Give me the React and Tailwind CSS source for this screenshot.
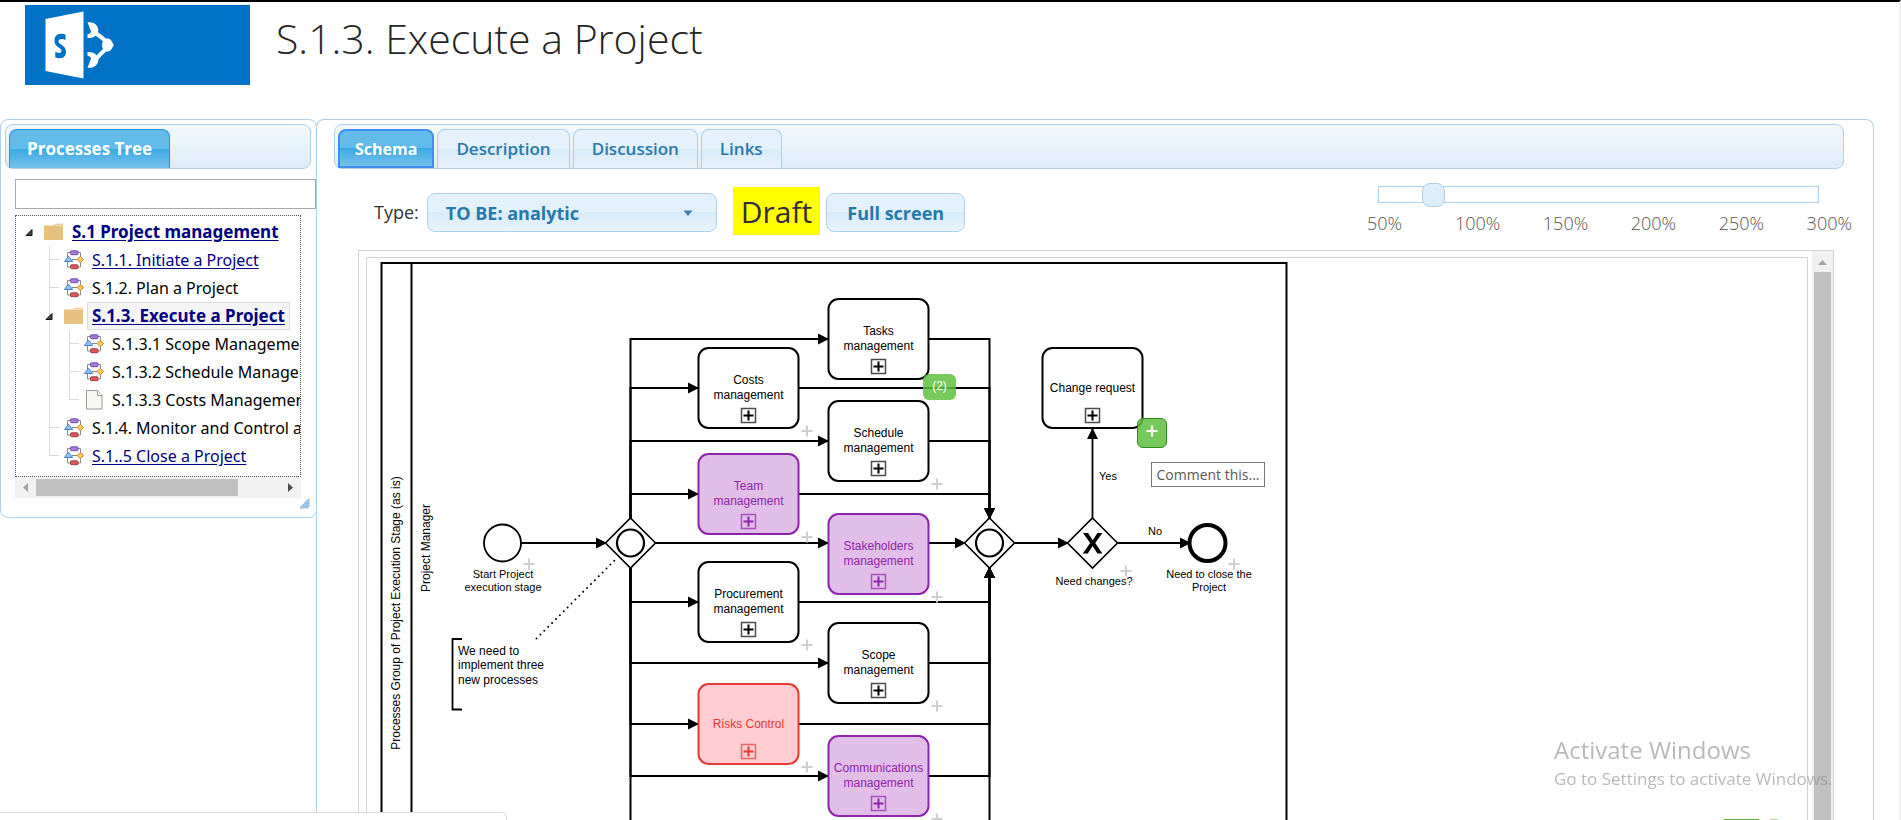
const TASKS = [
  { x: 828, y: 299, lines: ["Tasks", "management"], plus: false },
  { x: 698, y: 348, lines: ["Costs", "management"] },
  { x: 828, y: 401, lines: ["Schedule", "management"] },
  { x: 698, y: 454, lines: ["Team", "management"], tone: "purple" },
  { x: 828, y: 514, lines: ["Stakeholders", "management"], tone: "purple" },
  { x: 698, y: 562, lines: ["Procurement", "management"] },
  { x: 828, y: 623, lines: ["Scope", "management"] },
  { x: 698, y: 684, lines: ["Risks Control"], tone: "red" },
  { x: 828, y: 736, lines: ["Communications", "management"], tone: "purple" },
  { x: 1042, y: 348, lines: ["Change request"], plus: false },
];

const TONES = {
  plain: { fill: "#ffffff", stroke: "#000000" },
  purple: { fill: "#e1bee7", stroke: "#8e24aa" },
  red: { fill: "#ffcdd2", stroke: "#e53935" },
};

const BRANCHES = [
  { y: 339, to: 828, from: 928, join: 518 },
  { y: 388, to: 698, from: 798, join: 518 },
  { y: 441, to: 828, from: 928, join: 518 },
  { y: 494, to: 698, from: 798, join: 518 },
  { y: 602, to: 698, from: 798, join: 568 },
  { y: 663, to: 828, from: 928, join: 568 },
  { y: 724, to: 698, from: 798, join: 568 },
  { y: 776, to: 828, from: 928, join: 568 },
  { y: 840, to: 698, from: 798, join: 568 },
];

function Task({ x, y, lines, tone = "plain", plus = true }) {
  const { fill, stroke } = TONES[tone];
  const first = lines.length === 1 ? 44 : 36;
  return (
    <g>
      <rect x={x + 0.5} y={y} width="100" height="80" rx="10" fill={fill} stroke={stroke} strokeWidth="2" />
      {lines.map((line, i) => (
        <text key={line} x={x + 50.5} y={y + first + i * 15} textAnchor="middle" fontSize="12" fill={stroke}>
          {line}
        </text>
      ))}
      <rect x={x + 43.5} y={y + 60.5} width="14" height="14" fill="none" stroke={stroke} strokeWidth="1.5" strokeOpacity="0.7" />
      <path d={`M${x + 45.5} ${y + 67.5}h10M${x + 50.5} ${y + 62.5}v10`} stroke={stroke} strokeWidth="2" fill="none" />
      {plus && <Plus x={x + 109} y={y + 83} />}
    </g>
  );
}

function Plus({ x, y }) {
  return <path d={`M${x - 5.5} ${y}h11M${x} ${y - 5.5}v11`} stroke="#cfcfcf" strokeWidth="2" fill="none" />;
}

function Gateway({ x, y, children }) {
  return (
    <g>
      <path d={`M${x} ${y - 25}l25 25l-25 25l-25 -25z`} fill="#fff" stroke="#000" strokeWidth="1.6" />
      {children}
    </g>
  );
}

function Diagram() {
  return (
    <svg width="940" height="620" role="img" aria-label="Project execution process" className="block font-['Liberation_Sans',Arial,sans-serif]">
      <defs>
        <marker id="arrow" viewBox="0 0 11 12" refX="10" refY="6" markerWidth="11" markerHeight="12" markerUnits="userSpaceOnUse" orient="auto">
          <path d="M0 0.5L11 6L0 11.5z" fill="#000" />
        </marker>
      </defs>
      <g transform="translate(-367 -258)">
        <rect x="381.5" y="263" width="905" height="700" fill="none" stroke="#000" strokeWidth="2" />
        <path d="M411.5 263v700" stroke="#000" strokeWidth="2" />
        <text transform="translate(400 613) rotate(-90)" textAnchor="middle" fontSize="12">
          Processes Group of Project Execution Stage (as is)
        </text>
        <text transform="translate(430 548) rotate(-90)" textAnchor="middle" fontSize="12">
          Project Manager
        </text>

        <g fill="none" stroke="#000" strokeWidth="2">
          {BRANCHES.map((b) => (
            <g key={b.y}>
              <path d={`M630.5 ${b.join}V${b.y}H${b.to}`} markerEnd="url(#arrow)" />
              <path d={`M${b.from} ${b.y}H989.5V${b.join}`} markerEnd="url(#arrow)" />
            </g>
          ))}
          <path d="M521 543H606" markerEnd="url(#arrow)" />
          <path d="M655 543H828" markerEnd="url(#arrow)" />
          <path d="M928 543H965" markerEnd="url(#arrow)" />
          <path d="M1014 543H1068" markerEnd="url(#arrow)" />
          <path d="M1117 543H1190" markerEnd="url(#arrow)" />
          <path d="M1092.5 518V429" strokeWidth="1.8" markerEnd="url(#arrow)" />
          <path d="M536.5 638.5L617 558" strokeDasharray="0 5.5" strokeLinecap="round" />
          <path d="M462 639H452.500V709.500H462" strokeWidth="1.8" />
        </g>

        <circle cx="502.500" cy="543" r="18.500" fill="#fff" stroke="#000" strokeWidth="1.800" />
        <Gateway x={630.5} y={543}>
          <circle cx="630.5" cy="543" r="13.5" fill="none" stroke="#000" strokeWidth="2.2" />
        </Gateway>
        <Gateway x={989.5} y={543}>
          <circle cx="989.5" cy="543" r="13.5" fill="none" stroke="#000" strokeWidth="2.2" />
        </Gateway>
        <Gateway x={1092.5} y={543}>
          <path d="M1083 533h5l4.800 7.200l4.600 -7.200h5l-7.200 10l7.200 10.500h-5l-4.800 -7.500l-4.800 7.500h-5l7.400 -10.500z" fill="#000" />
        </Gateway>
        <circle cx="1207.500" cy="543" r="18" fill="#fff" stroke="#000" strokeWidth="4" />

        {TASKS.map((t) => (
          <Task key={t.lines.join(" ")} {...t} />
        ))}
        <Plus x={529} y={564} />
        <Plus x={1126} y={571} />
        <Plus x={1234} y={564} />

        <g fontSize="12">
          <text x="458" y="655">We need to</text>
          <text x="458" y="669">implement three</text>
          <text x="458" y="684">new processes</text>
        </g>
        <g fontSize="11" textAnchor="middle">
          <text x="503" y="578">Start Project</text>
          <text x="503" y="591">execution stage</text>
          <text x="1094" y="585">Need changes?</text>
          <text x="1209" y="578">Need to close the</text>
          <text x="1209" y="591">Project</text>
          <text x="1108" y="480">Yes</text>
          <text x="1155" y="535">No</text>
        </g>
      </g>
    </svg>
  );
}

function ProcessIcon() {
  return (
    <svg viewBox="0 0 20 20" className="size-5 shrink-0" aria-hidden="true">
      <path d="M7 2.500H3.500V17H7M13 2.500H16.500V17H13M8 9.500H13" fill="none" stroke="#8a8a8a" strokeWidth="1" />
      <rect x="6.500" y="0.800" width="7.500" height="3.900" rx="1" fill="#a57bdc" stroke="#6a3fa5" strokeWidth="0.900" />
      <path d="M4.500 6.200L8.700 11.500H0.300z" fill="#8fc1f7" stroke="#3c78c8" strokeWidth="0.900" />
      <path d="M16.300 6.300L19.500 9.500L16.300 12.700L13.100 9.500z" fill="#ffc95c" stroke="#b98222" strokeWidth="0.900" />
      <rect x="6.500" y="14.800" width="7.500" height="3.900" rx="1" fill="#e0565b" stroke="#943438" strokeWidth="0.900" />
    </svg>
  );
}

function FolderIcon() {
  return (
    <svg viewBox="0 0 20 20" className="size-5 shrink-0" aria-hidden="true">
      <path d="M0 3.500h10l1.500-1.800h7.500v16.300H0z" fill="#e8c080" />
      <path d="M11.500 3.200h7" stroke="#fff3da" strokeWidth="1" />
    </svg>
  );
}

function PageIcon() {
  return (
    <svg viewBox="0 0 20 20" className="size-5 shrink-0" aria-hidden="true">
      <path d="M2.500 0.500h11l4.500 5v13.500H2.500z" fill="#f7f8f4" stroke="#9a9a94" />
      <path d="M13.500 0.500v5h4.500" fill="#fff" stroke="#9a9a94" />
    </svg>
  );
}

function Guide({ kind }) {
  return (
    <svg viewBox="0 0 20 28" className="h-7 w-5 shrink-0" aria-hidden="true">
      <g fill="none" stroke="#d9d9d9">
        {(kind === "line" || kind === "tee" || kind === "open-tee") && <path d="M9.500 0V28" />}
        {kind === "tee" && <path d="M10 13.500H19" />}
        {kind === "elbow" && <path d="M9.500 0V13.500H19" />}
      </g>
      {(kind === "open" || kind === "open-tee") && <path d="M12 11.500V17.500H6z" fill="#444" stroke="#111" />}
    </svg>
  );
}

const TREE = [
  { guides: ["open"], icon: "folder", text: "S.1 Project management", link: true, bold: true },
  { guides: ["", "tee"], text: "S.1.1. Initiate a Project", link: true },
  { guides: ["", "tee"], text: "S.1.2. Plan a Project" },
  { guides: ["", "open-tee"], icon: "folder", text: "S.1.3. Execute a Project", link: true, bold: true, selected: true },
  { guides: ["", "line", "tee"], text: "S.1.3.1 Scope Management" },
  { guides: ["", "line", "tee"], text: "S.1.3.2 Schedule Management" },
  { guides: ["", "line", "elbow"], icon: "page", text: "S.1.3.3 Costs Management" },
  { guides: ["", "tee"], text: "S.1.4. Monitor and Control a Project" },
  { guides: ["", "elbow"], text: "S.1..5 Close a Project", link: true },
];

function TreeRow({ guides, icon, text, link, bold, selected }) {
  const box = selected
    ? "ml-[3px] border border-[#ddd] bg-[#f5f5f5] px-1 leading-[26px]"
    : "ml-2 leading-7";
  const weight = bold ? "text-[17px] font-bold" : "text-base";
  return (
    <li className="flex h-7 items-center whitespace-nowrap">
      {guides.map((g, i) => (
        <Guide key={i} kind={g} />
      ))}
      <span className="ml-1 shrink-0">
        {icon === "folder" ? <FolderIcon /> : icon === "page" ? <PageIcon /> : <ProcessIcon />}
      </span>
      <span className={`${box} ${weight}`}>
        {link ? (
          <a href="#process" className="text-[#000080] underline underline-offset-2">{text}</a>
        ) : (
          text
        )}
      </span>
    </li>
  );
}

const BAR = "flex h-[45px] items-end gap-[3px] rounded-lg border border-[#aed0ea] bg-linear-to-b from-[#f3f8fd] to-[#deecf8] pl-[3px]";
const TAB = "h-[39px] rounded-t-lg border font-['Open_Sans',sans-serif]";
const TAB_ON = "bg-linear-to-b from-[#62bbe9] from-50% via-[#3aaae3] via-50% to-[#74c1eb] font-bold text-white";
const TAB_OFF = "border-b-0 border-[#aed0ea] bg-linear-to-b from-[#e5f2fb] from-50% via-[#d7ebf9] via-50% to-[#e8f3fc] px-[18px] text-[17px] font-semibold text-[#2779aa]";
const CONTROL = "h-[39px] rounded-lg border border-[#aed0ea] bg-linear-to-b from-[#e3f1fb] from-50% via-[#d7ebf9] via-50% to-[#e8f3fc] text-lg font-bold text-[#2779aa]";

function Sidebar() {
  return (
    <aside className="w-[317px] shrink-0 rounded-lg border border-[#aed0ea] bg-white pt-1 pb-2">
      <div className={`${BAR} mr-[5px] ml-1`} role="tablist">
        <button role="tab" aria-selected="true" className={`${TAB} ${TAB_ON} border-b-0 border-[#2694e8] px-[17px] text-[17px]`}>Processes Tree</button>
      </div>
      <input aria-label="Search processes" className="mt-[10px] ml-[14px] block h-[30px] w-[301px] border border-[#a9a9a9] px-2 outline-none" />
      <div className="mt-[6px] mr-[15px] ml-[14px]">
        <ul className="overflow-hidden border border-dotted border-[#555] pt-[2px] pb-[6px] pl-1 font-['Noto_Sans',sans-serif] text-black">
          {TREE.map((row) => (
            <TreeRow key={row.text} {...row} />
          ))}
        </ul>
        <div className="flex h-[21px] items-center bg-[#f1f1f1]" aria-hidden="true">
          <svg viewBox="0 0 21 21" className="size-[21px] shrink-0"><path d="M13 6v9l-5-4.500z" fill="#a3a3a3" /></svg>
          <div className="h-[17px] w-[202px] bg-[#c1c1c1]" />
          <svg viewBox="0 0 21 21" className="ml-auto size-[21px] shrink-0"><path d="M8 6v9l5-4.500z" fill="#505050" /></svg>
        </div>
      </div>
      <svg viewBox="0 0 10 10" className="mt-[1px] mr-[6px] ml-auto size-[10px]" aria-hidden="true">
        <path d="M0 9.500L9.500 0M3 9.500L9.500 3M6 9.500L9.500 6" stroke="#8dbbe0" strokeWidth="1.800" fill="none" />
      </svg>
    </aside>
  );
}

function ZoomSlider() {
  return (
    <div className="-mt-[7px] mr-[21px] ml-auto w-[485px]">
      <input
        type="range"
        min="50"
        max="300"
        defaultValue="76"
        aria-label="Zoom"
        className="mx-[11px] block h-[17px] w-[441px] appearance-none border border-[#aed0ea] bg-white [&::-webkit-slider-thumb]:h-6 [&::-webkit-slider-thumb]:w-[23px] [&::-webkit-slider-thumb]:appearance-none [&::-webkit-slider-thumb]:rounded-lg [&::-webkit-slider-thumb]:border [&::-webkit-slider-thumb]:border-[#aed0ea] [&::-webkit-slider-thumb]:bg-[#dceefa]"
      />
      <div className="mt-[7px] flex text-lg leading-[26px] font-light text-[#555]">
        {["50%", "100%", "150%", "200%", "250%"].map((p) => (
          <span key={p} className="w-[88px]">{p}</span>
        ))}
        <span>300%</span>
      </div>
    </div>
  );
}

function Toolbar() {
  return (
    <div className="flex h-[63px] items-start pl-[57px] font-['Open_Sans',sans-serif]">
      <label htmlFor="type" className="text-lg leading-[39px] text-[#333]">Type:</label>
      <div className="relative ml-2">
        <select id="type" className={`${CONTROL} w-[290px] appearance-none pl-[18px] outline-none`}>
          <option>TO BE: analytic</option>
        </select>
        <svg viewBox="0 0 10 6" className="pointer-events-none absolute top-[17px] right-[24px] h-[6px] w-[10px]" aria-hidden="true">
          <path d="M0.500 0.500H9.500L5 6z" fill="#3d80b3" />
        </svg>
      </div>
      <span className="-mt-[6px] ml-4 flex h-12 items-center bg-[#ff0] px-2 text-[30px] text-[#362b36]">Draft</span>
      <button className={`${CONTROL} ml-[6px] px-5`}>Full screen</button>
      <ZoomSlider />
    </div>
  );
}

function Schema() {
  return (
    <div className="mr-[39px] ml-[41px] flex min-h-0 flex-1 border border-b-0 border-[#d3d3d3]">
      <div className="relative mt-[6px] mr-1 ml-[7px] min-w-0 flex-1 overflow-hidden border border-b-0 border-[#d3d3d3]">
        <Diagram />
        <span className="absolute top-[116px] left-[556px] flex h-[26px] w-[33px] items-center justify-center rounded-md bg-[#5fc03e]/85 pb-[2px] font-['Liberation_Sans',sans-serif] text-xs text-white">(2)</span>
        <button aria-label="Add comment" className="absolute top-[160px] left-[770px] flex size-[30px] items-center justify-center rounded-md border border-[#2e8f1f] bg-[#5fc03e]/85">
          <svg viewBox="0 0 12 12" className="-mt-1 size-3" aria-hidden="true"><path d="M0.500 6h11M6 0.500v11" stroke="#fff" strokeWidth="2.200" /></svg>
        </button>
        <span className="absolute top-[204px] left-[784px] flex h-[25px] w-[114px] items-center justify-center border border-[#767676] bg-white font-['Open_Sans',sans-serif] text-sm whitespace-nowrap text-[#575757]">Comment this...</span>
      </div>
      <div className="flex w-[21px] flex-col items-center bg-[#f1f1f1]" aria-hidden="true">
        <svg viewBox="0 0 21 21" className="size-[21px] shrink-0"><path d="M6 14h9l-4.500-5z" fill="#a3a3a3" /></svg>
        <div className="w-[17px] flex-1 bg-[#c1c1c1]" />
      </div>
    </div>
  );
}

function Logo() {
  return (
    <svg viewBox="0 0 225 80" className="h-20 w-[225px] shrink-0" role="img" aria-label="SharePoint">
      <path d="M0 0h225v80H0z" fill="#0072c6" />
      <path d="M20.500 14L58.500 6.500V73.500L20.500 66z" fill="#fff" />
      <path
        d="M40.500 29.500v5.700c-2.500-1.700-7-1.500-7 1.200c0 3.200 7.500 3.600 7.500 10.300c0 7-6.500 7.500-10.700 5.800v-6c3 2.200 6.200 1.900 6.200-.7c0-3.200-7-3.500-7-10.100c0-6.800 6-7.800 11-6.200z"
        fill="#0072c6"
      />
      <path d="M70.500 28C75 31 78 33.500 82 37M82 43C77.500 47 74.500 50 71 54" stroke="#fff" strokeWidth="4" fill="none" />
      <path d="M62.500 17.300c6-1 10.800 2.700 10.800 7.700c0 5-4.800 8.500-10.800 8v-3.500c2.500-.8 3.500-1.800 3.500-3.300z" fill="#fff" />
      <path d="M62.500 62.700c6 1 10.800-2.700 10.800-7.700c0-5-4.800-8.500-10.800-8v3.500c2.500 .8 3.500 1.800 3.500 3.300z" fill="#fff" />
      <path d="M77 40c0-4 2.500-6.500 6-6.500c2.500 0 4 3 5.800 6.500c-1.800 3.500-3.300 6.500-5.800 6.500c-3.500 0-6-2.500-6-6.500z" fill="#fff" />
    </svg>
  );
}

export default function App() {
  return (
    <div className="flex h-screen flex-col overflow-hidden border-t-2 border-r-2 border-t-black border-r-[#f1f1f1] bg-white">
      <header className="flex h-[117px] shrink-0 pt-[3px] pl-[25px]">
        <Logo />
        <h1 className="ml-[26px] font-['Open_Sans',sans-serif] text-[41px] leading-[66px] font-light text-[#262626]">S.1.3. Execute a Project</h1>
      </header>
      <div className="flex min-h-0 flex-1 items-start">
        <Sidebar />
        <main className="mr-[25px] -ml-px flex min-w-0 flex-1 flex-col self-stretch rounded-t-lg border border-b-0 border-[#aed0ea] pt-1">
          <nav className={`${BAR} mr-[29px] ml-[17px]`} role="tablist">
            <button role="tab" aria-selected="true" className={`${TAB} ${TAB_ON} border-2 border-[#3f8ff2] px-[15px] text-base`}>Schema</button>
            <button role="tab" aria-selected="false" className={`${TAB} ${TAB_OFF}`}>Description</button>
            <button role="tab" aria-selected="false" className={`${TAB} ${TAB_OFF}`}>Discussion</button>
            <button role="tab" aria-selected="false" className={`${TAB} ${TAB_OFF}`}>Links</button>
          </nav>
          <div className="mt-6"><Toolbar /></div>
          <div className="-mt-[6px] flex min-h-0 flex-1 flex-col">
            <Schema />
          </div>
        </main>
      </div>
      <div className="pointer-events-none fixed right-[62px] bottom-7 w-[285px] font-['Open_Sans',sans-serif] whitespace-nowrap text-[#8a8a8a]/60">
        <p className="text-2xl leading-8">Activate Windows</p>
        <p className="text-[17px] leading-[26px]">Go to Settings to activate Windows.</p>
      </div>
      <div className="fixed right-[123px] bottom-0 flex gap-[11px]" aria-hidden="true">
        <span className="h-px w-[35px] bg-[#5cb531]" />
        <span className="h-px w-2 bg-[#b5d9a5]" />
      </div>
      <div className="fixed bottom-0 left-0 h-2 w-[507px] rounded-tr-md border-t border-r border-[#dcdcdc] bg-white" aria-hidden="true" />
    </div>
  );
}
